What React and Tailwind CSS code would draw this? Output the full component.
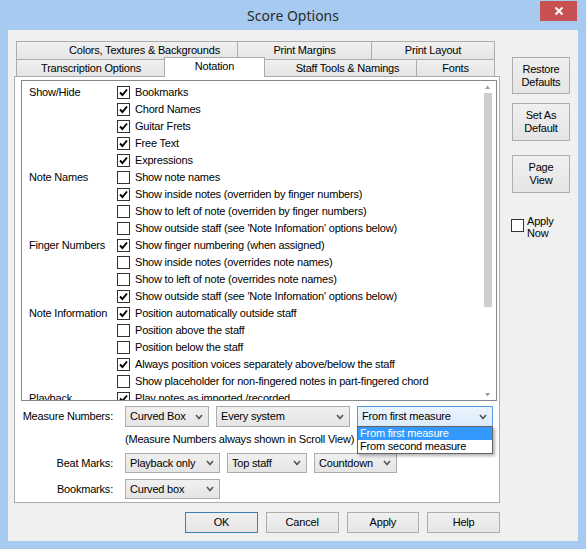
import React from "react";

const rows = [
  ["Show/Hide", true, "Bookmarks"],
  ["", true, "Chord Names"],
  ["", true, "Guitar Frets"],
  ["", true, "Free Text"],
  ["", true, "Expressions"],
  ["Note Names", false, "Show note names"],
  ["", true, "Show inside notes (overriden by finger numbers)"],
  ["", false, "Show to left of note (overriden by finger numbers)"],
  ["", false, "Show outside staff (see 'Note Infomation' options below)"],
  ["Finger Numbers", true, "Show finger numbering (when assigned)"],
  ["", false, "Show inside notes (overrides note names)"],
  ["", false, "Show to left of note (overrides note names)"],
  ["", true, "Show outside staff (see 'Note Infomation' options below)"],
  ["Note Information", true, "Position automatically outside staff"],
  ["", false, "Position above the staff"],
  ["", false, "Position below the staff"],
  ["", true, "Always position voices separately above/below the staff"],
  ["", false, "Show placeholder for non-fingered notes in part-fingered chord"],
  ["Playback", true, "Play notes as imported /recorded"],
];

function Check({ checked }) {
  return (
    <div className="w-[13px] h-[13px] border border-[#333333] bg-white flex items-center justify-center shrink-0">
      {checked && (
        <svg width="11" height="11" viewBox="0 0 11 11">
          <path d="M2 5.5 L4.4 8 L9 2.5" fill="none" stroke="#000" strokeWidth="1.9" />
        </svg>
      )}
    </div>
  );
}

function Chevron() {
  return (
    <svg width="8" height="6" viewBox="0 0 8 6" className="shrink-0">
      <path d="M1 1 L4 4.5 L7 1" fill="none" stroke="#555" strokeWidth="1.6" />
    </svg>
  );
}

function Drop({ w, text, focused, h = "h-[21px]" }) {
  return (
    <div
      className={`${w} ${h} border flex items-center justify-between pl-[4px] pr-[5px] ${
        focused
          ? "border-[#569de5] bg-gradient-to-b from-[#ebf4fd] to-[#dcecfc]"
          : "border-[#acacac] bg-gradient-to-b from-[#f0f0f0] to-[#e5e5e5]"
      }`}
    >
      <span className="whitespace-nowrap">{text}</span>
      <Chevron />
    </div>
  );
}

function Btn({ children, cls = "", def }) {
  return (
    <div
      className={`border ${
        def ? "border-[#3c7fb1]" : "border-[#adadad]"
      } bg-gradient-to-b from-[#f0f0f0] to-[#e5e5e5] flex items-center justify-center text-center leading-[13px] ${cls}`}
    >
      {children}
    </div>
  );
}

export default function App() {
  return (
    <div
      className="w-[586px] h-[549px] bg-[#a6caf0] flex flex-col text-[11px] tracking-[-0.2px] text-black"
      style={{ fontFamily: '"Liberation Sans", Arial, sans-serif' }}
    >
      <div className="h-[30px] relative flex items-center justify-center">
        <span
          className="text-[14px] tracking-normal text-[#2b2b2b]"
          style={{ fontFamily: '"Noto Sans", "Open Sans", sans-serif' }}
        >
          Score Options
        </span>
        <div className="absolute right-[9px] top-[1px] w-[37px] h-[20px] bg-[#c75050] flex items-center justify-center">
          <svg width="10" height="10" viewBox="0 0 10 10">
            <path d="M1.5 1.5 L8.5 8.5 M8.5 1.5 L1.5 8.5" stroke="#fff" strokeWidth="2" />
          </svg>
        </div>
      </div>

      <div className="ml-[8px] w-[570px] h-[511px] bg-[#f0f0f0] flex pl-[6px] pt-[10px]">
        {/* left column */}
        <div className="w-[486px] flex flex-col">
          {/* tab row 1 */}
          <div className="flex h-[18px] ml-[2px] mt-[1px]">
            <div className="w-[222px] h-full border border-b-0 border-[#acacac] bg-gradient-to-b from-[#f0f0f0] to-[#e5e5e5] flex items-center pl-[52px]">
              Colors, Textures &amp; Backgrounds
            </div>
            <div className="w-[135px] -ml-px h-full border border-b-0 border-[#acacac] bg-gradient-to-b from-[#f0f0f0] to-[#e5e5e5] flex items-center justify-center">
              Print Margins
            </div>
            <div className="w-[124px] -ml-px h-full border border-b-0 border-[#acacac] bg-gradient-to-b from-[#f0f0f0] to-[#e5e5e5] flex items-center justify-center">
              Print Layout
            </div>
          </div>
          {/* tab row 2 */}
          <div className="flex h-[17px] ml-[2px] items-start relative z-10">
            <div className="w-[150px] h-[17px] border border-b-0 border-[#acacac] bg-gradient-to-b from-[#f0f0f0] to-[#e5e5e5] flex items-center justify-center">
              Transcription Options
            </div>
            <div className="w-[101px] -ml-[2px] -mt-[2px] h-[20px] border border-b-0 border-[#acacac] bg-white flex items-center justify-center pb-[2px]">
              Notation
            </div>
            <div className="w-[153px] -ml-[1px] h-[17px] border border-b-0 border-[#acacac] bg-gradient-to-b from-[#f0f0f0] to-[#e5e5e5] flex items-center justify-center pl-[14px]">
              Staff Tools &amp; Namings
            </div>
            <div className="w-[79px] -ml-px h-[17px] border border-b-0 border-[#acacac] bg-gradient-to-b from-[#f0f0f0] to-[#e5e5e5] flex items-center justify-center">
              Fonts
            </div>
          </div>

          {/* panel */}
          <div className="h-[427px] border border-[#acacac] bg-white flex flex-col">
            <div className="ml-[6px] mt-[3px] w-[476px] h-[321px] border border-[#828790] flex">
              <div className="flex-1 overflow-hidden pt-[3px]">
                {rows.map(([cat, c, label], i) => (
                  <div key={i} className="h-[17px] flex items-center pl-[7px]">
                    <div className="w-[88px] shrink-0 whitespace-nowrap">{cat}</div>
                    <Check checked={c} />
                    <div className="ml-[5px] whitespace-nowrap">{label}</div>
                  </div>
                ))}
              </div>
              <div className="w-[17px] bg-white flex flex-col items-center">
                <div className="h-[12px] flex items-center justify-center">
                  <svg width="5" height="4" viewBox="0 0 5 4">
                    <path d="M0 4 L2.5 0.5 L5 4 Z" fill="#a0a0a0" />
                  </svg>
                </div>
                <div className="w-[8px] h-[214px] bg-[#cdcdcd]" />
                <div className="flex-1" />
                <div className="h-[10px] flex items-center justify-center">
                  <svg width="5" height="4" viewBox="0 0 5 4">
                    <path d="M0 0 L2.5 3.5 L5 0 Z" fill="#a0a0a0" />
                  </svg>
                </div>
              </div>
            </div>

            {/* Measure Numbers */}
            <div className="flex items-center mt-[5px] h-[21px]">
              <div className="w-[98px] text-right">Measure Numbers:</div>
              <div className="ml-[12px] flex gap-[7px]">
                <Drop w="w-[84px]" text="Curved Box" />
                <Drop w="w-[134px]" text="Every system" />
                <div className="relative">
                  <Drop w="w-[136px]" text="From first measure" focused />
                  <div className="absolute left-0 top-[20px] w-[136px] bg-white border border-[#646464] shadow-[2px_2px_3px_rgba(0,0,0,0.3)] z-20">
                    <div className="h-[13px] leading-[13px] bg-[#3399ff] text-white pl-[2px]">From first measure</div>
                    <div className="h-[13px] leading-[13px] pl-[2px]">From second measure</div>
                  </div>
                </div>
              </div>
            </div>
            <div className="mt-[4px] h-[16px] leading-[16px] pl-[110px]">
              (Measure Numbers always shown in Scroll View)
            </div>
            <div className="flex items-center mt-[6px] h-[20px]">
              <div className="w-[98px] text-right">Beat Marks:</div>
              <div className="ml-[12px] flex gap-[7px]">
                <Drop w="w-[95px]" h="h-[20px]" text="Playback only" />
                <Drop w="w-[80px]" h="h-[20px]" text="Top staff" />
                <Drop w="w-[83px]" h="h-[20px]" text="Countdown" />
              </div>
            </div>
            <div className="flex items-center mt-[6px] h-[20px]">
              <div className="w-[98px] text-right">Bookmarks:</div>
              <div className="ml-[12px] flex gap-[7px]">
                <Drop w="w-[95px]" h="h-[20px]" text="Curved box" />
              </div>
            </div>
          </div>

          {/* bottom buttons */}
          <div className="flex mt-[9px] ml-[171px] gap-[8px]">
            <Btn def cls="w-[73px] h-[21px]">OK</Btn>
            <Btn cls="w-[73px] h-[21px]">Cancel</Btn>
            <Btn cls="w-[73px] h-[21px]">Apply</Btn>
            <Btn cls="w-[73px] h-[21px]">Help</Btn>
          </div>
        </div>

        {/* right column */}
        <div className="ml-[12px] w-[58px] flex flex-col pt-[17px]">
          <Btn cls="w-[58px] h-[37px]">
            Restore
            <br />
            Defaults
          </Btn>
          <Btn cls="w-[58px] h-[38px] mt-[9px]">
            Set As
            <br />
            Default
          </Btn>
          <Btn cls="w-[58px] h-[38px] mt-[14px]">
            Page
            <br />
            View
          </Btn>
          <div className="flex items-start mt-[26px] -ml-px">
            <Check checked={false} />
            <div className="ml-[3px] leading-[12px] -mt-[4px]">
              Apply
              <br />
              Now
            </div>
          </div>
        </div>
      </div>
    </div>
  );
}
